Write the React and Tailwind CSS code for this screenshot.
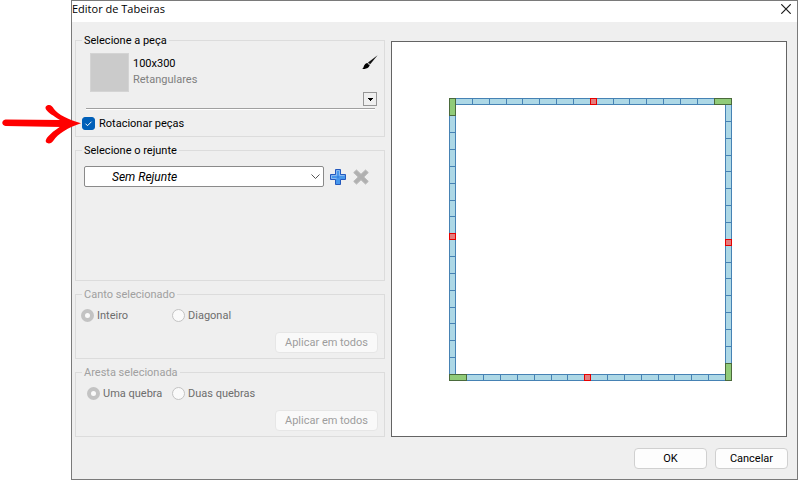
import { useState } from 'react';

// tile joints along each side of the border, in canvas units
const sides = [
  { id: 'top', horizontal: true, at: 56, from: 63, to: 322, joints: [80, 97, 114, 130, 147, 164, 181, 221, 237, 254, 271, 288, 305], cut: 198 },
  { id: 'bottom', horizontal: true, at: 332, from: 74, to: 333, joints: [91, 108, 125, 142, 159, 175, 215, 232, 249, 266, 282, 299, 316], cut: 192 },
  { id: 'left', horizontal: false, at: 57, from: 73, to: 332, joints: [90, 107, 124, 141, 158, 174, 214, 231, 248, 265, 281, 298, 315], cut: 191 },
  { id: 'right', horizontal: false, at: 333, from: 62, to: 321, joints: [79, 96, 113, 129, 146, 163, 180, 220, 236, 253, 270, 287, 304], cut: 197 },
];

const corners = [
  { x: 57, y: 56, w: 6, h: 17 },
  { x: 322, y: 56, w: 17, h: 6 },
  { x: 57, y: 332, w: 17, h: 6 },
  { x: 333, y: 321, w: 6, h: 17 },
];

function Side({ side }) {
  const { horizontal, at, from, to, joints, cut } = side;
  return (
    <g stroke="#4682b4">
      {horizontal ? (
        <rect x={from} y={at} width={to - from} height="6" fill="#add8e6" />
      ) : (
        <rect x={at} y={from} width="6" height={to - from} fill="#add8e6" />
      )}
      {joints.map((j) => (
        <path key={j} d={horizontal ? `M${j} ${at}v6` : `M${at} ${j}h6`} />
      ))}
      <rect x={horizontal ? cut : at} y={horizontal ? at : cut} width="6" height="6" fill="#e47c7c" stroke="#e60000" />
    </g>
  );
}

function Preview() {
  return (
    <div className="flex-1 mt-[9px] border border-[#646464] bg-white">
      <svg viewBox="0 0 394 394" className="block w-full" shapeRendering="crispEdges">
        <g transform="translate(.5 .5)">
          {sides.map((s) => <Side key={s.id} side={s} />)}
          {corners.map((c) => (
            <rect key={`${c.x}-${c.y}`} x={c.x} y={c.y} width={c.w} height={c.h} fill="#90cb78" stroke="#4a6a3c" />
          ))}
        </g>
      </svg>
    </div>
  );
}

function Group({ title, disabled, className, children }) {
  return (
    <fieldset disabled={disabled} className={`border border-[#dcdcdc] px-1.5 ${className}`}>
      <legend className={`px-0.5 leading-[17px] ${disabled ? 'text-[#a0a0a0]' : 'text-black'}`}>{title}</legend>
      {children}
    </fieldset>
  );
}

function Radio({ name, label, value, current, onChange }) {
  return (
    <label className="flex items-center gap-[3px] leading-[17px] text-[#6d6d6d]">
      <input
        type="radio"
        name={name}
        checked={current === value}
        onChange={() => onChange(value)}
        className="appearance-none size-[13px] rounded-full border border-[#c3c3c3] bg-[#fafafa] checked:border-4"
      />
      {label}
    </label>
  );
}

function ApplyAll() {
  return (
    <button className="block ml-auto mt-2 w-[103px] h-[21px] pt-0.5 rounded border border-[#e6e6e6] bg-[#f9f9f9] text-[#9d9d9d]">
      Aplicar em todos
    </button>
  );
}

function DialogButton({ children }) {
  return (
    <button className="w-[73px] h-[21px] pt-0.5 rounded border border-[#d0d0d0] bg-[#fdfdfd]">{children}</button>
  );
}

export default function App() {
  const [rotate, setRotate] = useState(true);
  const [corner, setCorner] = useState('inteiro');
  const [edge, setEdge] = useState('uma');

  return (
    <div className="relative min-h-screen flex bg-white pl-[71px] pr-px font-['Roboto',sans-serif] text-[11px] text-black">
      <main className="flex-1 flex flex-col border border-[#7a7a7a] bg-[#efefef]">
        <header className="flex items-start justify-between h-[21px] bg-white pr-1.5">
          <h1 className="font-['Open_Sans',sans-serif] leading-4">Editor de Tabeiras</h1>
          <button aria-label="Fechar" className="pt-[3px]">
            <svg width="10" height="10" viewBox="0 0 10 10" className="block" stroke="#1a1a1a" strokeWidth="1.2">
              <path d="M.3.3l9.4 9.4M9.7.3L.3 9.7" />
            </svg>
          </button>
        </header>

        <div className="flex gap-1.5 pt-2.5 pl-[3px] pr-2.5">
          <div className="w-[310px] shrink-0 flex flex-col gap-[5px]">
            <Group title="Selecione a peça" className="h-[105px]">
              <div className="flex pt-1 pl-2">
                <div className="size-[39px] border border-[#d4d4d4] bg-[#cbcbcb]" />
                <div className="pl-1 pt-[3px] leading-4">
                  <p>100x300</p>
                  <p className="text-[#808080]">Retangulares</p>
                </div>
                <button aria-label="Pintar" className="ml-auto self-start pt-0.5">
                  <svg width="16" height="15" viewBox="0 0 16 15" className="block">
                    <path d="M15.6.2L8.2 9.3 6 7.4z" fill="#111" />
                    <path d="M5.6 8L7.8 9.9C6.8 13 4 14 .2 14 2 12.8 1.600 10.400 3.200 9 4 8.300 4.800 8 5.600 8z" fill="#000" />
                    <path d="M5.500 8.600l1.700 1.400" stroke="#888" strokeWidth=".7" />
                  </svg>
                </button>
              </div>
              <div className="flex justify-end pb-0.5 pr-px">
                <button aria-label="Mais peças" className="size-3.5 flex items-center justify-center border border-[#969696]">
                  <svg width="5" height="3" viewBox="0 0 5 3" className="block" shapeRendering="crispEdges">
                    <path d="M0 0h5v1H4v1H3v1H2V2H1V1H0z" />
                  </svg>
                </button>
              </div>
              <div className="h-0.5 ml-1 mr-[3px] border-t border-[#a0a0a0] bg-white" />
              <label className="flex items-center gap-1 w-max mt-[5px] leading-[17px]">
                <span className="relative">
                  <input
                    type="checkbox"
                    checked={rotate}
                    onChange={(e) => setRotate(e.target.checked)}
                    className="appearance-none block size-[13px] rounded-[3px] border border-[#868686] bg-white checked:border-[#005fb8] checked:bg-[#005fb8]"
                  />
                  {rotate && (
                    <svg viewBox="0 0 13 13" className="absolute inset-0 size-[13px]" fill="none" stroke="#fff">
                      <path d="M3.500 6.700l2 2 4-4" />
                    </svg>
                  )}
                </span>
                Rotacionar peças
              </label>
            </Group>

            <Group title="Selecione o rejunte" className="h-[139px]">
              <div className="flex items-center pt-[7px] pl-0.5">
                <div className="relative">
                  <select aria-label="Rejunte" className="appearance-none block w-60 h-[21px] pl-[27px] rounded-xs border border-[#8a8a8a] bg-white text-xs italic">
                    <option>Sem Rejunte</option>
                  </select>
                  <svg width="9" height="5" viewBox="0 0 9 5" className="absolute right-1 top-2 pointer-events-none" fill="none" stroke="#555">
                    <path d="M.5.5l4 4 4-4" />
                  </svg>
                </div>
                <button aria-label="Adicionar rejunte" className="ml-1.5">
                  <svg width="16" height="16" viewBox="0 0 16 16" className="block">
                    <path d="M5.500.5h5v5h5v5h-5v5h-5v-5h-5v-5h5z" fill="#4697ec" stroke="#2459bd" />
                    <path d="M6.500 9.500h-5v-3h5v-5h3v5h5" fill="none" stroke="#8ab9f0" />
                    <path d="M7 7h2v2H7z" fill="#3a82e0" />
                  </svg>
                </button>
                <button aria-label="Remover rejunte" className="ml-[7px]">
                  <svg width="16" height="16" viewBox="0 0 16 16" className="block">
                    <path d="M3.500 1L8 5.300 12.500 1 15.300 3.600 10.800 8l4.500 4.400-2.800 2.700L8 10.800 3.500 15.100.7 12.400 5.200 8 .7 3.600z" fill="#b0b0b0" stroke="#bababa" strokeLinejoin="round" />
                  </svg>
                </button>
              </div>
            </Group>

            <Group title="Canto selecionado" disabled className="h-[73px]">
              <div className="grid grid-cols-[91px_1fr] pt-1 -ml-px">
                <Radio name="canto" label="Inteiro" value="inteiro" current={corner} onChange={setCorner} />
                <Radio name="canto" label="Diagonal" value="diagonal" current={corner} onChange={setCorner} />
              </div>
              <ApplyAll />
            </Group>

            <Group title="Aresta selecionada" disabled className="h-[73px]">
              <div className="grid grid-cols-[85px_1fr] pt-1 pl-[5px]">
                <Radio name="aresta" label="Uma quebra" value="uma" current={edge} onChange={setEdge} />
                <Radio name="aresta" label="Duas quebras" value="duas" current={edge} onChange={setEdge} />
              </div>
              <ApplyAll />
            </Group>
          </div>

          <Preview />
        </div>

        <footer className="flex justify-end gap-2 pt-[11px] pb-2.5 pr-[9px]">
          <DialogButton>OK</DialogButton>
          <DialogButton>Cancelar</DialogButton>
        </footer>
      </main>

      {/* callout arrow pointing at the rotate option */}
      <svg width="80" height="42" viewBox="0 0 80 42" className="absolute left-0.5 top-[103px] pointer-events-none" fill="#f00">
        <path d="M3.500 16.500L60 17v7L3.500 23C-.8 22.500-.8 17 3.500 16.500z" />
        <path d="M45 2.500C48 1 50.500 3 52 6 56 11.500 66 16.500 79 20.300 66 24.500 56 31 51.500 37.500 49.500 40.500 46 41.500 44 39 42.500 36.500 47 31 58 23.700V17C51 12.500 46.500 10 44 6.500 43 4.500 43.500 3.200 45 2.500z" />
      </svg>
    </div>
  );
}
